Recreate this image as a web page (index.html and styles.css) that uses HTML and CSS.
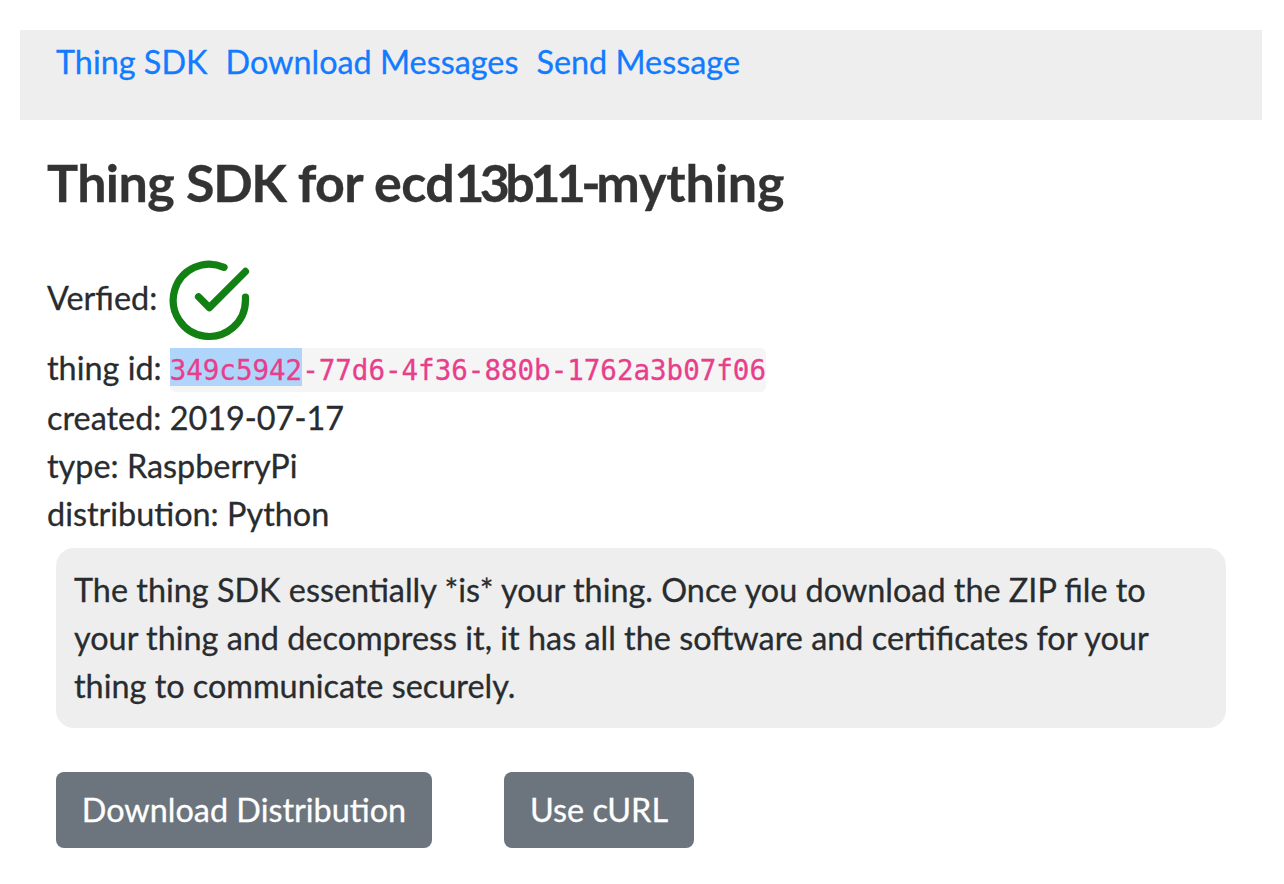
FILE: index.html
```html
<!DOCTYPE html>
<html lang="en">
<head>
<meta charset="utf-8">
<title>Thing SDK</title>
<link rel="stylesheet" href="styles.css">
</head>
<body>
<nav class="nav"><a href="#">Thing SDK</a><a href="#">Download Messages</a><a href="#">Send Message</a></nav>
<main class="content">
<h1 class="title">Thing <span class="caps">SDK</span> for ecd<span class="digits">13b11-</span><span class="name">mything</span></h1>
<div class="verified"><span class="label">Verfied:</span>
<svg class="check" viewBox="0 0 24 24"><path d="M22 11.08V12a10 10 0 1 1-5.93-9.14"/><path d="M22 4 12 14.01l-3-3"/></svg></div>
<div class="row id-row"><span>thing id:</span><code class="code"><mark class="sel">349c5942</mark>-77d6-4f36-880b-1762a3b07f06</code></div>
<div class="row">created: 2019-07-17</div>
<div class="row">type: RaspberryPi</div>
<div class="row">distribution: Python</div>
<p class="info">The thing SDK essentially *is* your thing. Once you download the ZIP file to<br>your thing and decompress it, it has all the software and certificates for your<br>thing to communicate securely.</p>
<div class="actions"><button class="btn wide">Download Distribution</button><button class="btn">Use cURL</button></div>
</main>
</body>
</html>
```
FILE: styles.css
```css
* { box-sizing: border-box; }
body { margin: 0; padding: 30px 22px 0 20px; background: #fff; color: #292c2f; font: 32.38px/48px Lato, sans-serif; -webkit-text-stroke: .3px; }
.nav { height: 90px; padding: 8px 36px; background: #eee; display: flex; gap: 18px; white-space: nowrap; }
.nav a { color: #127bff; text-decoration: none; }
.content { padding: 0 36px 0 27px; }
.title { margin: 31px 0 0; font-size: 52px; line-height: 62px; font-weight: 700; color: #333; white-space: nowrap; letter-spacing: -.6px; }
.caps { letter-spacing: -1.4px; }
.digits { letter-spacing: -4.6px; }
.name { letter-spacing: -.1px; }
.verified { margin-top: 40px; height: 95px; display: flex; align-items: center; gap: 9px; }
.label { padding-bottom: 5px; }
.check { width: 86.7px; height: 86.7px; fill: none; stroke: #128012; stroke-width: 2; stroke-linecap: round; stroke-linejoin: round; }
.row { height: 48px; white-space: nowrap; }
.id-row { display: flex; gap: 8px; height: 46px; line-height: 40px; }
.code { height: 44px; font: 27.52px/44px "DejaVu Sans Mono", monospace; color: #e83e8c; background: #f5f5f5; border-radius: 6px; }
.sel { display: inline-block; height: 38px; color: inherit; background: #b0d5fb; }
.info { margin: 10px 0 0 9px; height: 180px; padding: 18px; border-radius: 18px; background: #eee; white-space: nowrap; }
.actions { margin: 44px 0 0 9px; display: flex; gap: 72px; }
.btn { width: 190px; height: 76px; padding: 0; border: 0; border-radius: 8px; background: #6c757d; color: #fff; font: 32.38px/48px Lato, sans-serif; white-space: nowrap; }
.wide { width: 376px; }
```
